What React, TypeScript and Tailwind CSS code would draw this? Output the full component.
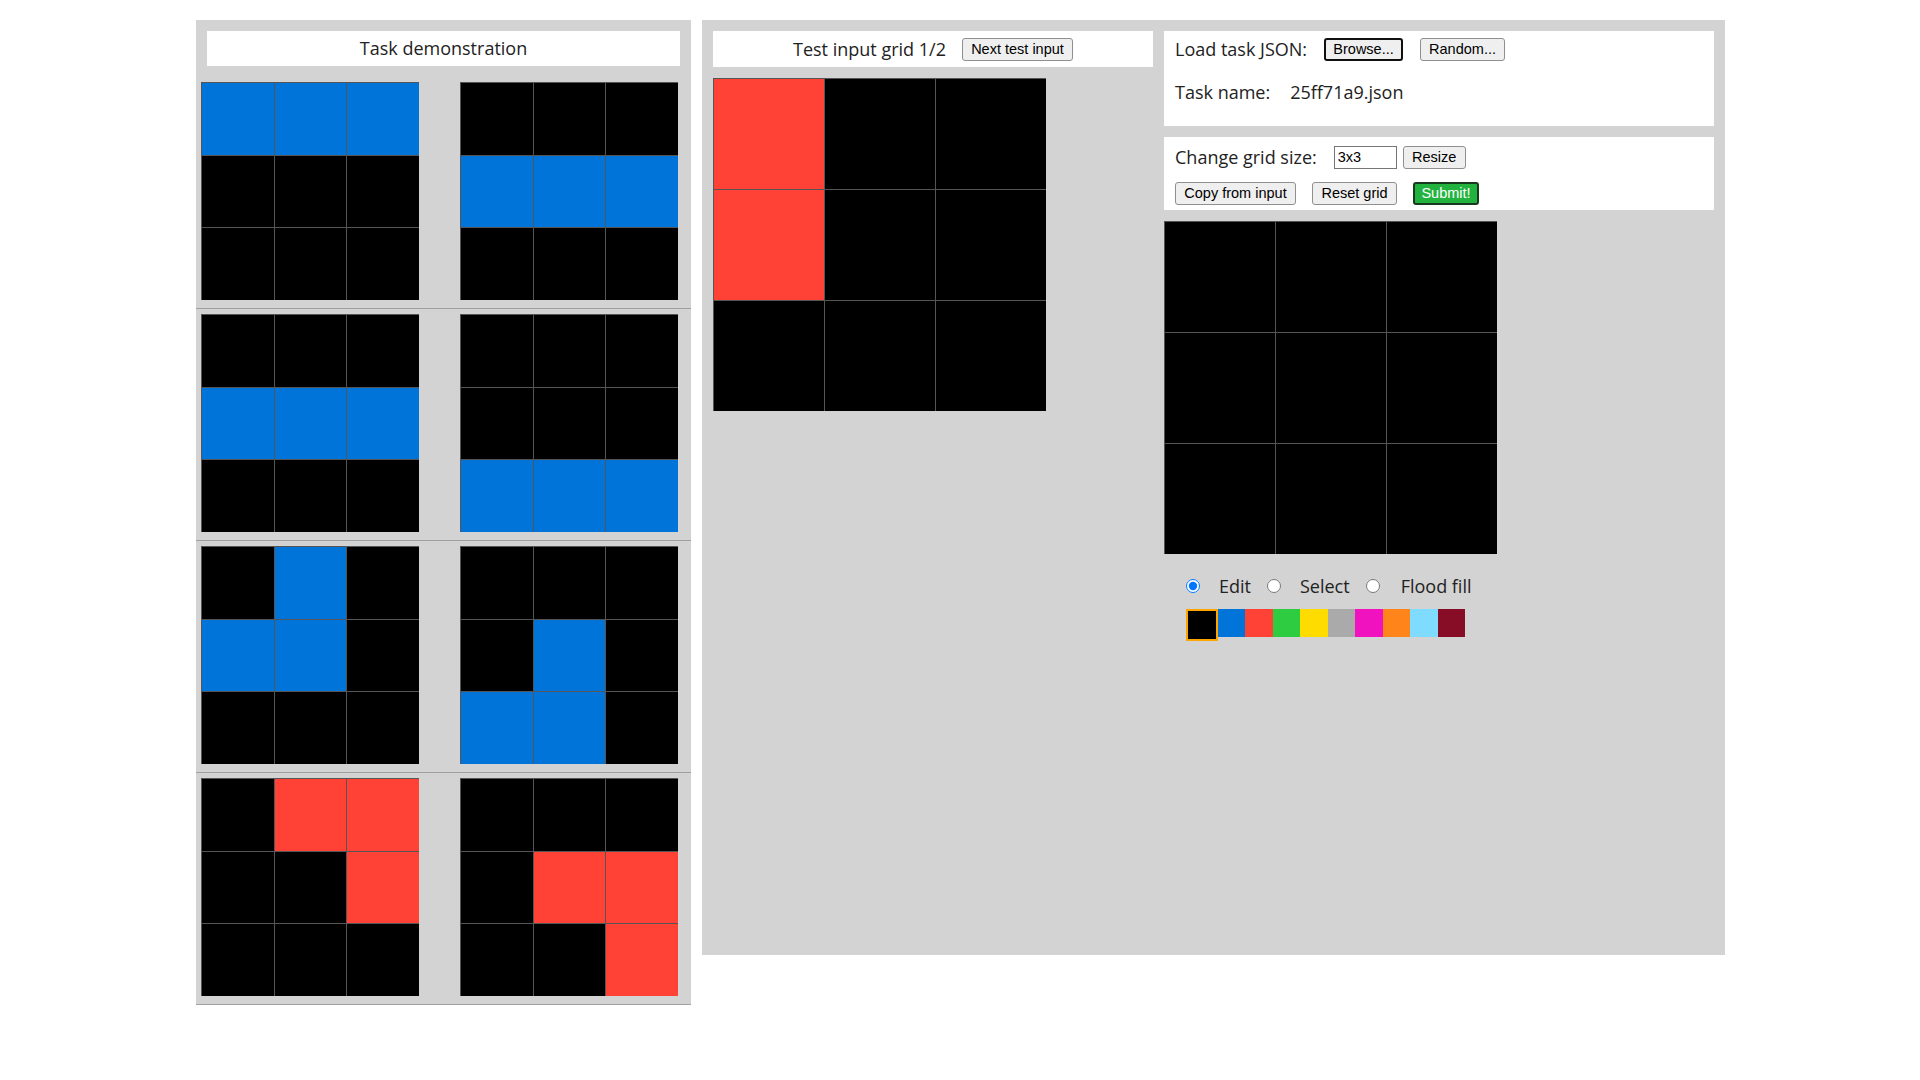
import React from "react";

const CELL = [
  "bg-[#000000]",
  "bg-[#0074D9]",
  "bg-[#FF4136]",
  "bg-[#2ECC40]",
  "bg-[#FFDC00]",
  "bg-[#AAAAAA]",
  "bg-[#F012BE]",
  "bg-[#FF851B]",
  "bg-[#7FDBFF]",
  "bg-[#870C25]",
];

type G = number[][];

const pairs: [G, G][] = [
  [
    [[1, 1, 1], [0, 0, 0], [0, 0, 0]],
    [[0, 0, 0], [1, 1, 1], [0, 0, 0]],
  ],
  [
    [[0, 0, 0], [1, 1, 1], [0, 0, 0]],
    [[0, 0, 0], [0, 0, 0], [1, 1, 1]],
  ],
  [
    [[0, 1, 0], [1, 1, 0], [0, 0, 0]],
    [[0, 0, 0], [0, 1, 0], [1, 1, 0]],
  ],
  [
    [[0, 2, 2], [0, 0, 2], [0, 0, 0]],
    [[0, 0, 0], [0, 2, 2], [0, 0, 2]],
  ],
];

const testInput: G = [[2, 0, 0], [2, 0, 0], [0, 0, 0]];
const output: G = [[0, 0, 0], [0, 0, 0], [0, 0, 0]];

function Grid({ g, size }: { g: G; size: "sm" | "lg" }) {
  return (
    <div
      className={
        "grid grid-cols-3 grid-rows-3 shrink-0 " +
        (size === "sm" ? "w-[218px] h-[218px]" : "w-[333px] h-[333px]")
      }
    >
      {g.flat().map((v, i) => (
        <div key={i} className={"border-t border-l border-[#555555] " + CELL[v]} />
      ))}
    </div>
  );
}

const btn =
  "h-[23px] px-[6px] bg-[#efefef] border border-[#8f8f8f] rounded-[3px] text-[14.5px] text-black leading-none flex items-center justify-center font-['Liberation_Sans',Arial,sans-serif]";

export default function App() {
  return (
    <div className="min-h-screen bg-white text-[#222] font-['Open_Sans',sans-serif] text-[18px]">
      <div className="flex items-start gap-[11px] pl-[196px] pt-[20px]">
        {/* Left: demonstration */}
        <div className="w-[495px] shrink-0 bg-[#d3d3d3] pt-[11px]">
          <div className="ml-[11px] w-[473px] h-[35px] bg-white flex items-center justify-center">
            Task demonstration
          </div>
          <div className="mt-[11px]">
            {pairs.map(([a, b], i) => (
              <div
                key={i}
                className="flex gap-[41px] pl-[5px] pt-[5px] pb-[8px] border-b border-[#a0a0a0]"
              >
                <Grid g={a} size="sm" />
                <Grid g={b} size="sm" />
              </div>
            ))}
          </div>
        </div>

        {/* Middle + right */}
        <div className="w-[1023px] h-[935px] shrink-0 bg-[#d3d3d3] p-[11px] flex items-start gap-[11px]">
          <div className="w-[440px] shrink-0 flex flex-col gap-[11px]">
            <div className="h-[36px] bg-white flex items-center justify-center gap-[16px]">
              <span>Test input grid 1/2</span>
              <button className={btn + " w-[111px]"}>Next test input</button>
            </div>
            <Grid g={testInput} size="lg" />
          </div>

          <div className="w-[550px] shrink-0 flex flex-col">
            <div className="h-[95px] bg-white px-[11px] flex flex-col">
              <div className="h-[36px] flex items-center">
                <span>Load task JSON:</span>
                <button className={btn + " ml-[17px] w-[79px] border-2 border-[#101010]"}>Browse...</button>
                <button className={btn + " ml-[17px] w-[85px]"}>Random...</button>
              </div>
              <div className="mt-[13px] h-[24px] flex items-center">
                <span>Task name:</span>
                <span className="ml-[20px]">25ff71a9.json</span>
              </div>
            </div>

            <div className="mt-[11px] h-[73px] bg-white px-[11px] flex flex-col">
              <div className="mt-[8px] h-[24px] flex items-center">
                <span>Change grid size:</span>
                <input
                  readOnly
                  value="3x3"
                  className="ml-[17px] w-[63px] h-[23px] border border-[#767676] bg-white px-[3px] text-[14.5px] text-black font-['Liberation_Sans',Arial,sans-serif] outline-none"
                />
                <button className={btn + " ml-[6px] w-[63px]"}>Resize</button>
              </div>
              <div className="mt-[13px] h-[23px] flex items-center">
                <button className={btn + " w-[121px]"}>Copy from input</button>
                <button className={btn + " ml-[16px] w-[85px]"}>Reset grid</button>
                <button
                  className="ml-[16px] w-[66px] h-[23px] bg-[#22b33f] border-2 border-[#1a3a1f] rounded-[3px] text-[14.5px] text-white leading-none flex items-center justify-center font-['Liberation_Sans',Arial,sans-serif]"
                >
                  Submit!
                </button>
              </div>
            </div>

            <div className="mt-[11px]">
              <Grid g={output} size="lg" />
            </div>

            <div className="mt-[20px] h-[24px] ml-[22px] flex items-center">
              <input type="radio" name="mode" defaultChecked className="m-0 w-[14px] h-[14px]" />
              <span className="ml-[19px]">Edit</span>
              <input type="radio" name="mode" className="m-0 ml-[16px] w-[14px] h-[14px]" />
              <span className="ml-[19px]">Select</span>
              <input type="radio" name="mode" className="m-0 ml-[16px] w-[14px] h-[14px]" />
              <span className="ml-[21px]">Flood fill</span>
            </div>

            <div className="mt-[11px] ml-[22px] flex items-start">
              {CELL.map((c, i) => (
                <div
                  key={i}
                  className={
                    "w-[27.5px] h-[27.5px] box-content " +
                    c +
                    (i === 0 ? " border-2 border-[#FFA500]" : "")
                  }
                />
              ))}
            </div>
          </div>
        </div>
      </div>
    </div>
  );
}
